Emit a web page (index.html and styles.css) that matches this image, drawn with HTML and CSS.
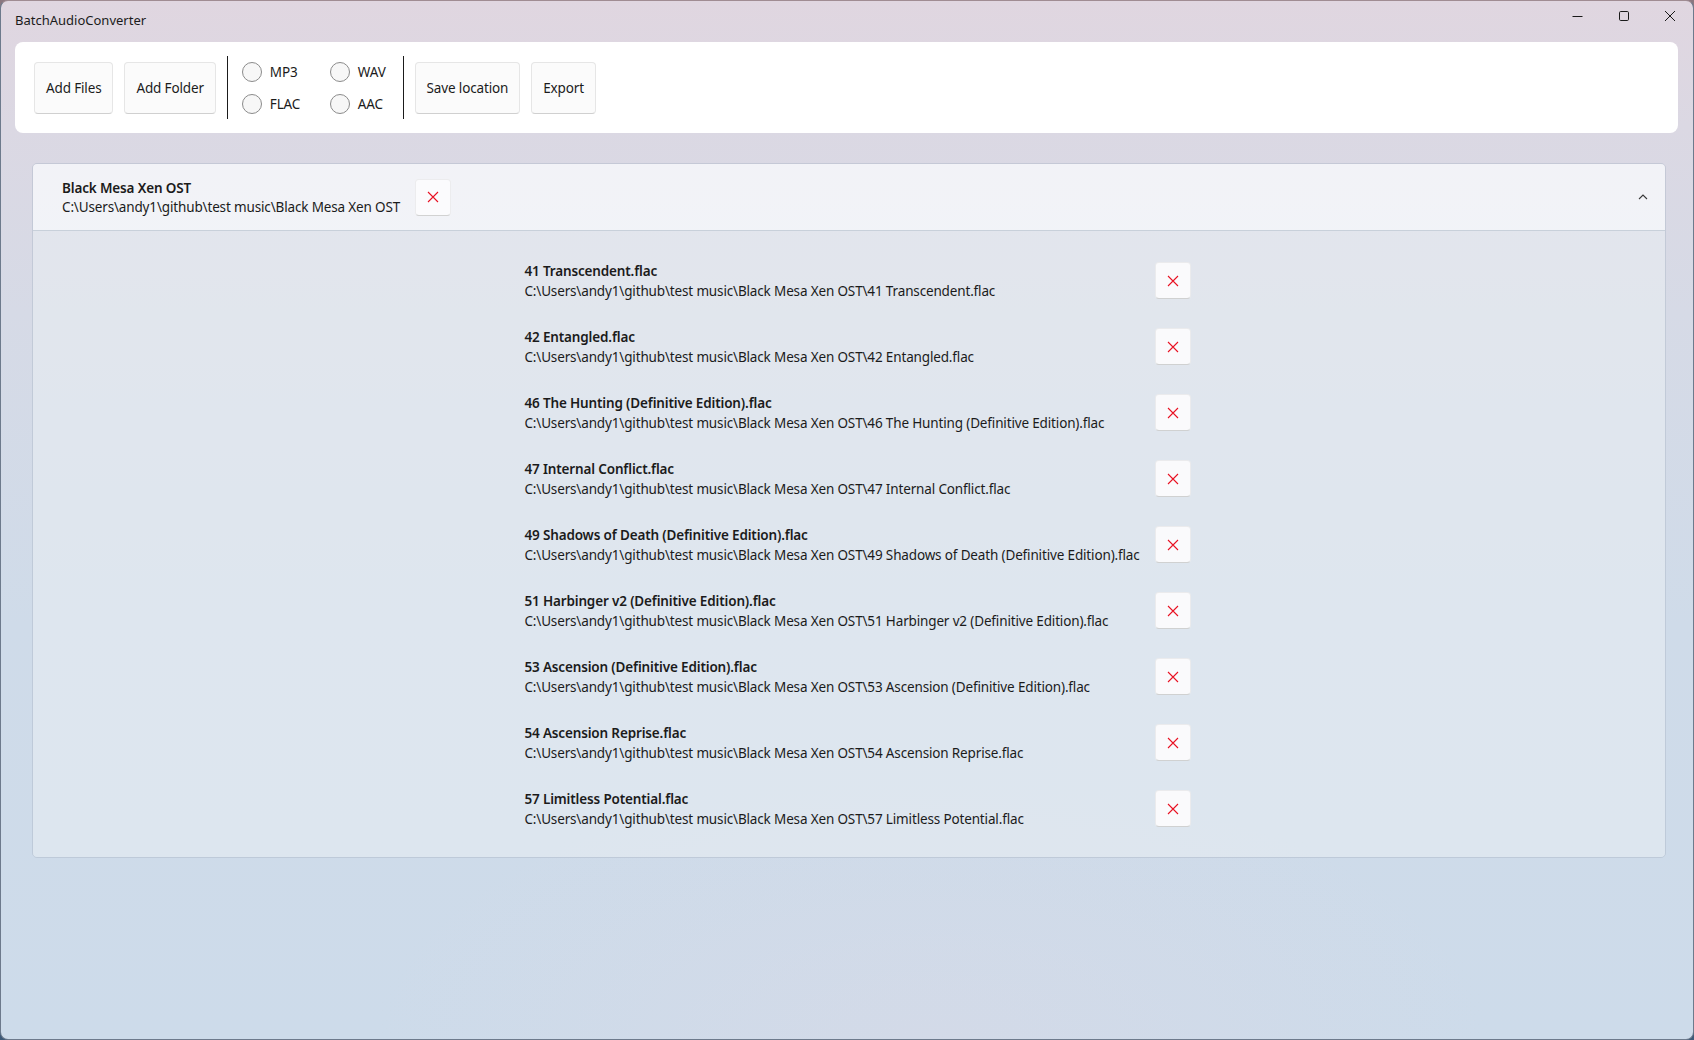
FILE: index.html
```html
<!DOCTYPE html>
<html lang="en">
<head>
<meta charset="utf-8">
<title>BatchAudioConverter</title>
<link rel="stylesheet" href="styles.css">
</head>
<body>
<div class="window">
  <div class="titlebar">
    <span class="app-title">BatchAudioConverter</span>
    <div class="caption-buttons">
      <span class="cap-btn"><svg width="12" height="12" viewBox="0 0 12 12"><path d="M0.5 6.5H10.5" stroke="#1a1a1a" stroke-width="1"/></svg></span>
      <span class="cap-btn"><svg width="12" height="12" viewBox="0 0 12 12"><rect x="1.5" y="1.5" width="9" height="9" rx="1.2" fill="none" stroke="#1a1a1a" stroke-width="1"/></svg></span>
      <span class="cap-btn"><svg width="12" height="12" viewBox="0 0 12 12"><path d="M1 1L11 11M11 1L1 11" stroke="#1a1a1a" stroke-width="1"/></svg></span>
    </div>
  </div>

  <div class="toolbar">
    <button class="btn">Add Files</button>
    <button class="btn">Add Folder</button>
    <div class="vsep"></div>
    <div class="radios">
      <label class="radio"><span class="circle"></span>MP3</label>
      <label class="radio"><span class="circle"></span>WAV</label>
      <label class="radio"><span class="circle"></span>FLAC</label>
      <label class="radio"><span class="circle"></span>AAC</label>
    </div>
    <div class="vsep vsep-right"></div>
    <button class="btn">Save location</button>
    <button class="btn">Export</button>
  </div>

  <div class="expander">
    <div class="exp-header">
      <div class="entry-text">
        <div class="entry-name">Black Mesa Xen OST</div>
        <div class="entry-path">C:\Users\andy1\github\test music\Black Mesa Xen OST</div>
      </div>
      <button class="xbtn"><svg width="12" height="12" viewBox="0 0 12 12"><path d="M1 1L11 11M11 1L1 11" stroke="#e81123" stroke-width="1.1"/></svg></button>
      <span class="chev"><svg width="10" height="6" viewBox="0 0 10 6"><path d="M1 5L5 1L9 5" fill="none" stroke="#3a3a3a" stroke-width="1.1"/></svg></span>
    </div>
    <div class="exp-content">
      <div class="file-list">
        <div class="entry-text"><div class="entry-name">41 Transcendent.flac</div><div class="entry-path">C:\Users\andy1\github\test music\Black Mesa Xen OST\41 Transcendent.flac</div></div>
        <button class="xbtn"><svg width="12" height="12" viewBox="0 0 12 12"><path d="M1 1L11 11M11 1L1 11" stroke="#e81123" stroke-width="1.1"/></svg></button>

        <div class="entry-text"><div class="entry-name">42 Entangled.flac</div><div class="entry-path">C:\Users\andy1\github\test music\Black Mesa Xen OST\42 Entangled.flac</div></div>
        <button class="xbtn"><svg width="12" height="12" viewBox="0 0 12 12"><path d="M1 1L11 11M11 1L1 11" stroke="#e81123" stroke-width="1.1"/></svg></button>

        <div class="entry-text"><div class="entry-name">46 The Hunting (Definitive Edition).flac</div><div class="entry-path">C:\Users\andy1\github\test music\Black Mesa Xen OST\46 The Hunting (Definitive Edition).flac</div></div>
        <button class="xbtn"><svg width="12" height="12" viewBox="0 0 12 12"><path d="M1 1L11 11M11 1L1 11" stroke="#e81123" stroke-width="1.1"/></svg></button>

        <div class="entry-text"><div class="entry-name">47 Internal Conflict.flac</div><div class="entry-path">C:\Users\andy1\github\test music\Black Mesa Xen OST\47 Internal Conflict.flac</div></div>
        <button class="xbtn"><svg width="12" height="12" viewBox="0 0 12 12"><path d="M1 1L11 11M11 1L1 11" stroke="#e81123" stroke-width="1.1"/></svg></button>

        <div class="entry-text"><div class="entry-name">49 Shadows of Death (Definitive Edition).flac</div><div class="entry-path">C:\Users\andy1\github\test music\Black Mesa Xen OST\49 Shadows of Death (Definitive Edition).flac</div></div>
        <button class="xbtn"><svg width="12" height="12" viewBox="0 0 12 12"><path d="M1 1L11 11M11 1L1 11" stroke="#e81123" stroke-width="1.1"/></svg></button>

        <div class="entry-text"><div class="entry-name">51 Harbinger v2 (Definitive Edition).flac</div><div class="entry-path">C:\Users\andy1\github\test music\Black Mesa Xen OST\51 Harbinger v2 (Definitive Edition).flac</div></div>
        <button class="xbtn"><svg width="12" height="12" viewBox="0 0 12 12"><path d="M1 1L11 11M11 1L1 11" stroke="#e81123" stroke-width="1.1"/></svg></button>

        <div class="entry-text"><div class="entry-name">53 Ascension (Definitive Edition).flac</div><div class="entry-path">C:\Users\andy1\github\test music\Black Mesa Xen OST\53 Ascension (Definitive Edition).flac</div></div>
        <button class="xbtn"><svg width="12" height="12" viewBox="0 0 12 12"><path d="M1 1L11 11M11 1L1 11" stroke="#e81123" stroke-width="1.1"/></svg></button>

        <div class="entry-text"><div class="entry-name">54 Ascension Reprise.flac</div><div class="entry-path">C:\Users\andy1\github\test music\Black Mesa Xen OST\54 Ascension Reprise.flac</div></div>
        <button class="xbtn"><svg width="12" height="12" viewBox="0 0 12 12"><path d="M1 1L11 11M11 1L1 11" stroke="#e81123" stroke-width="1.1"/></svg></button>

        <div class="entry-text"><div class="entry-name">57 Limitless Potential.flac</div><div class="entry-path">C:\Users\andy1\github\test music\Black Mesa Xen OST\57 Limitless Potential.flac</div></div>
        <button class="xbtn"><svg width="12" height="12" viewBox="0 0 12 12"><path d="M1 1L11 11M11 1L1 11" stroke="#e81123" stroke-width="1.1"/></svg></button>
      </div>
    </div>
  </div>
</div>
</body>
</html>
```

FILE: styles.css
```css
* { box-sizing: border-box; }

html, body {
  margin: 0;
  padding: 0;
}

body {
  width: 1694px;
  height: 1040px;
  overflow: hidden;
  background: linear-gradient(180deg, #8c7880 0%, #56687f 60%, #3d5a78 100%);
  font-family: "Noto Sans", "Open Sans", sans-serif;
  font-size: 13.5px;
  letter-spacing: -0.15px;
  color: #1b1b1b;
}

.window {
  width: 1694px;
  height: 1040px;
  border: 1px solid #6d7a8c;
  border-top-color: #a08c92;
  border-radius: 8px;
  overflow: hidden;
  display: flex;
  flex-direction: column;
  background:
    radial-gradient(ellipse 800px 380px at 55% 100%, rgba(222, 216, 228, 0.35), rgba(222, 216, 228, 0) 70%),
    linear-gradient(180deg, #e0d6e0 0%, #dbd8e3 12%, #d6dae6 30%, #cfdbe9 60%, #cddbea 100%);
}

/* Title bar */
.titlebar {
  height: 41px;
  flex: none;
  display: flex;
  align-items: flex-start;
  justify-content: space-between;
}

.app-title {
  padding-left: 14px;
  line-height: 38px;
  font-size: 13px;
  letter-spacing: 0;
  color: #1b1b1b;
}

.caption-buttons {
  display: flex;
}

.cap-btn {
  width: 46px;
  height: 29px;
  display: flex;
  align-items: center;
  justify-content: center;
}

/* Toolbar */
.toolbar {
  flex: none;
  height: 91px;
  margin: 0 15px 0 14px;
  background: #ffffff;
  border-radius: 8px;
  display: flex;
  align-items: center;
  padding-left: 19px;
  gap: 11px;
}

.btn {
  height: 52px;
  padding: 0 11px;
  font-family: inherit;
  font-size: 13.5px;
  letter-spacing: -0.15px;
  color: #1b1b1b;
  background: #fbfbfb;
  border: 1px solid #e6e6e6;
  border-bottom-color: #d0d0d0;
  border-radius: 4px;
}

.vsep {
  width: 1px;
  height: 63px;
  background: #1b1b1b;
}

.vsep-right {
  margin-left: 6px;
}

.radios {
  display: grid;
  grid-template-columns: 88px auto;
  grid-auto-rows: 32px;
  margin-left: 3px;
}

.radio {
  display: flex;
  align-items: center;
  gap: 8px;
}

.circle {
  width: 20px;
  height: 20px;
  border-radius: 50%;
  border: 1px solid #8b8b8b;
  background: #f7f7f7;
}

/* Expander */
.expander {
  flex: none;
  margin: 30px 27px 0 31px;
  border: 1px solid rgba(170, 182, 198, 0.45);
  border-radius: 5px;
  overflow: hidden;
}

.exp-header {
  height: 67px;
  display: flex;
  align-items: center;
  padding-left: 29px;
  padding-right: 17px;
  background: rgba(250, 251, 253, 0.75);
  border-bottom: 1px solid #c8d0da;
}

.entry-text {
  line-height: 19.5px;
  white-space: nowrap;
  padding-top: 2px;
}

.entry-name {
  font-weight: 600;
}

.xbtn {
  width: 36px;
  height: 37px;
  padding: 0;
  display: flex;
  align-items: center;
  justify-content: center;
  background: rgba(252, 252, 253, 0.92);
  border: 1px solid rgba(0, 0, 0, 0.06);
  border-bottom-color: rgba(0, 0, 0, 0.17);
  border-radius: 4px;
}

.exp-header .xbtn {
  margin-left: 15px;
}

.chev {
  margin-left: auto;
  display: flex;
  align-items: center;
}

.exp-content {
  background: rgba(240, 243, 247, 0.45);
  padding: 19px 0 18px 17px;
}

.file-list {
  display: grid;
  grid-template-columns: auto 36px;
  grid-auto-rows: 61px;
  column-gap: 15px;
  row-gap: 5px;
  justify-content: center;
  align-items: center;
}
```
